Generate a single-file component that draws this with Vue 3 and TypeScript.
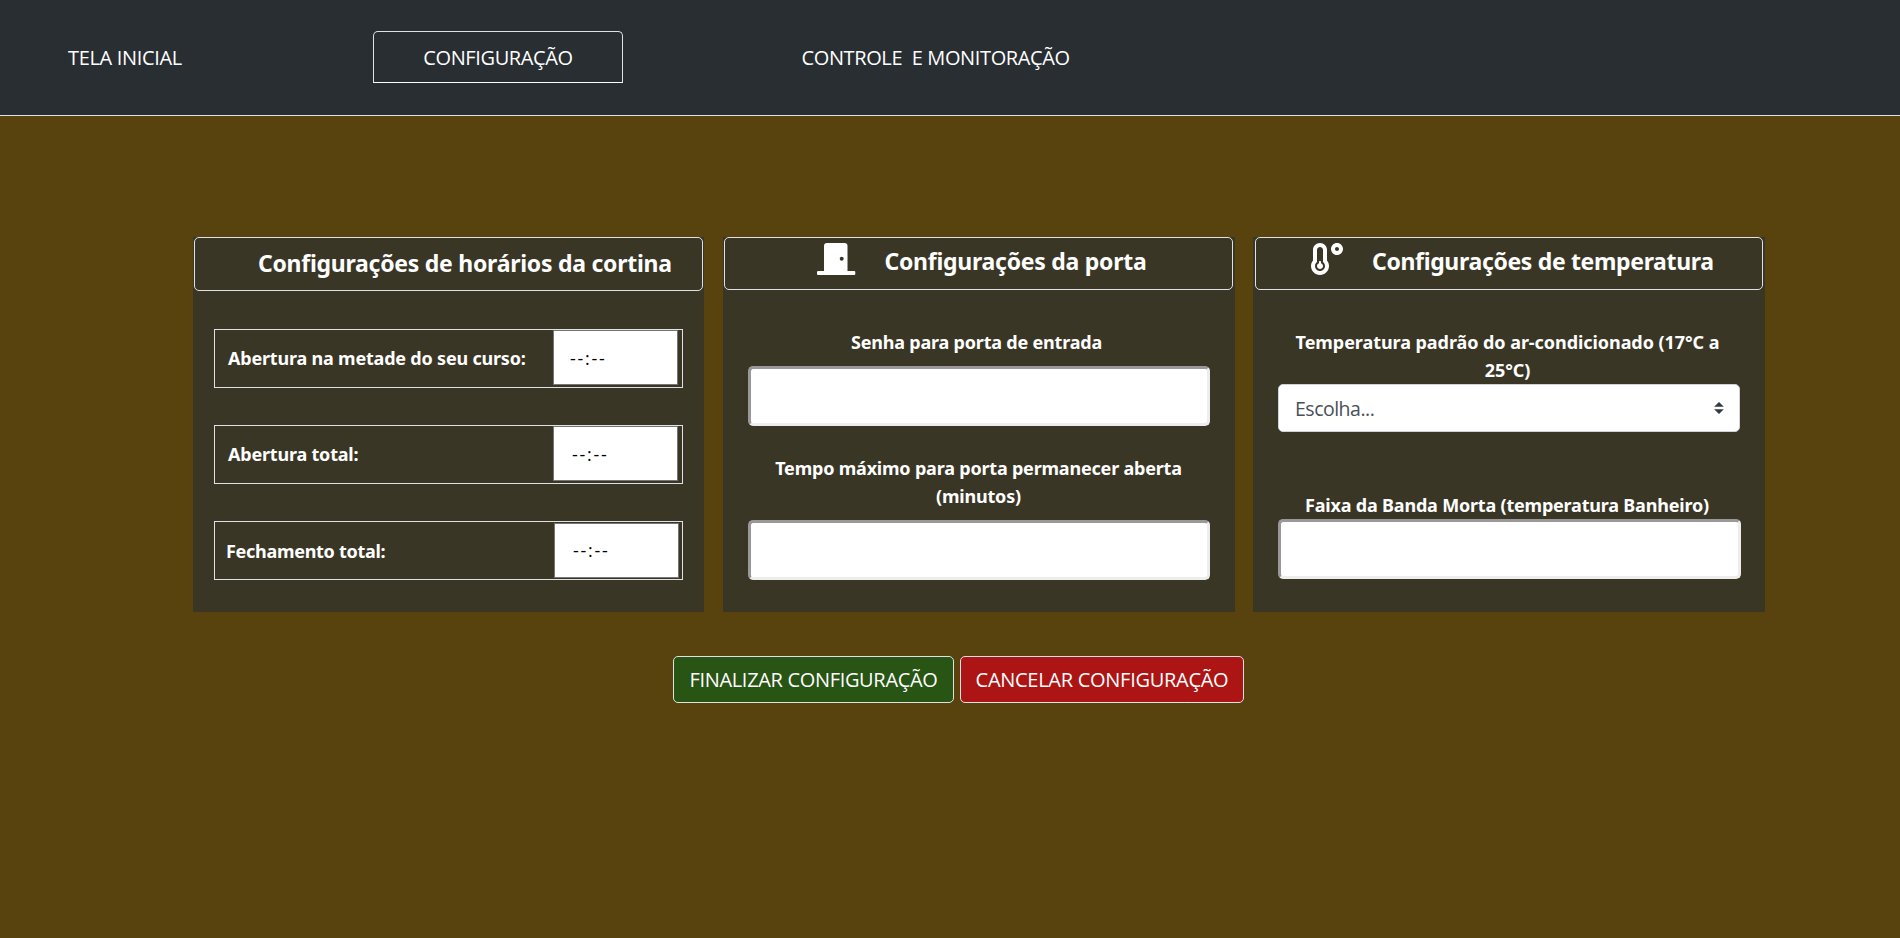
<script setup lang="ts">
import { ref } from 'vue'

interface NavItem {
  id: string
  label: string
  active?: boolean
}

interface Schedule {
  id: string
  label: string
}

const navItems: NavItem[] = [
  { id: 'home', label: 'TELA INICIAL' },
  { id: 'config', label: 'CONFIGURAÇÃO', active: true },
  { id: 'monitor', label: 'CONTROLE  E MONITORAÇÃO' },
]

const schedules: Schedule[] = [
  { id: 'half', label: 'Abertura na metade do seu curso:' },
  { id: 'full', label: 'Abertura total:' },
  { id: 'close', label: 'Fechamento total:' },
]

const password = ref('')
const openMinutes = ref('')
const deadBand = ref('')
</script>

<template>
  <div class="page">
    <nav class="navbar">
      <a
        v-for="item in navItems"
        :key="item.id"
        class="nav-link"
        :class="[`nav-${item.id}`, { active: item.active }]"
      >{{ item.label }}</a>
    </nav>

    <main class="cards">
      <section class="card">
        <header class="card-header header-curtain">
          <h2>Configurações de horários da cortina</h2>
        </header>
        <div class="schedules">
          <div v-for="s in schedules" :key="s.id" class="schedule" :class="`schedule-${s.id}`">
            <span class="schedule-label">{{ s.label }}</span>
            <span class="time">--:--</span>
          </div>
        </div>
      </section>

      <section class="card">
        <header class="card-header header-door">
          <svg class="icon-door" width="39" height="32" viewBox="0 0 39 32">
            <path
              fill="#fff"
              fill-rule="evenodd"
              d="M7 28V3a3 3 0 0 1 3-3h17.500a3 3 0 0 1 3 3v25H37.300a1 1 0 0 1 1 1v2a1 1 0 0 1-1 1H1a1 1 0 0 1-1-1v-2a1 1 0 0 1 1-1zM24.700 13.700a2 2 0 1 0 0 4a2 2 0 1 0 0-4z"
            />
          </svg>
          <h2>Configurações da porta</h2>
        </header>
        <div class="fields fields-door">
          <label class="field-label label-password">Senha para porta de entrada</label>
          <input v-model="password" class="field" type="password" />
          <label class="field-label label-minutes">Tempo máximo para porta permanecer aberta<br />(minutos)</label>
          <input v-model="openMinutes" class="field" type="text" />
        </div>
      </section>

      <section class="card">
        <header class="card-header header-temp">
          <svg class="icon-temp" width="32" height="32" viewBox="0 0 512 512">
            <path
              fill="#fff"
              d="M416 0c-52.900 0-96 43.100-96 96s43.100 96 96 96 96-43.100 96-96-43.100-96-96-96zm0 128c-17.700 0-32-14.300-32-32s14.300-32 32-32 32 14.300 32 32-14.300 32-32 32zm-160-16C256 50.100 205.900 0 144 0S32 50.100 32 112v166.500C12.300 303.200 0 334 0 368c0 79.500 64.500 144 144 144s144-64.500 144-144c0-34-12.300-64.900-32-89.500V112zM144 448c-44.100 0-80-35.900-80-80 0-25.500 12.200-48.900 32-63.800V112c0-26.500 21.500-48 48-48s48 21.500 48 48v192.200c19.800 14.800 32 38.300 32 63.800 0 44.100-35.900 80-80 80zm16-125.100V304c0-8.800-7.200-16-16-16s-16 7.200-16 16v18.900c-18.600 6.600-32 24.200-32 45.100 0 26.500 21.500 48 48 48s48-21.500 48-48c0-20.900-13.400-38.500-32-45.100z"
            />
          </svg>
          <h2>Configurações de temperatura</h2>
        </header>
        <div class="fields fields-temp">
          <label class="field-label label-temp">Temperatura padrão do ar-condicionado (17°C a<br />25°C)</label>
          <div class="select">
            <span>Escolha...</span>
            <svg width="10" height="12" viewBox="0 0 4 5">
              <path fill="#343a40" d="M2 0L0 2h4zm0 5L0 3h4z" />
            </svg>
          </div>
          <label class="field-label label-band">Faixa da Banda Morta (temperatura Banheiro)</label>
          <input v-model="deadBand" class="field field-band" type="text" />
        </div>
      </section>
    </main>

    <div class="actions">
      <button class="btn btn-finish" type="button">FINALIZAR CONFIGURAÇÃO</button>
      <button class="btn btn-cancel" type="button">CANCELAR CONFIGURAÇÃO</button>
    </div>
  </div>
</template>

<style>
body {
  background: #58420e;
}
</style>

<style scoped>
.page,
.page * {
  box-sizing: border-box;
}

.page {
  min-height: 938px;
  background: #58420e;
  color: #fff;
  font-family: "Open Sans", "Noto Sans", sans-serif;
  font-size: 20px;
}

.navbar {
  display: flex;
  align-items: flex-start;
  height: 116px;
  padding: 31px 0 0 68px;
  background: #292e32;
  border-bottom: 1px solid #dee2e6;
}

.nav-link {
  height: 52px;
  line-height: 53px;
  letter-spacing: -0.38px;
  white-space: pre;
}

.nav-home {
  width: 305px;
  letter-spacing: -0.33px;
}

.nav-link.active {
  width: 250px;
  line-height: 51px;
  text-align: center;
  border: 1px solid #dee2e6;
  border-bottom-color: #fff;
  border-radius: 5px 5px 0 0;
}

.nav-monitor {
  margin-left: 178.5px;
}

.cards {
  display: grid;
  grid-template-columns: 511px 512px 512px;
  column-gap: 18.5px;
  padding: 121px 0 0 193px;
}

.card {
  height: 375px;
  background: #3a3625;
}

.card-header {
  display: flex;
  height: 53px;
  margin: 0 1px;
  border: 1px solid #dee2e6;
  border-radius: 5px;
}

.card-header h2 {
  margin: 0;
  font: bold 23px/46px "Noto Sans", sans-serif;
  letter-spacing: -0.26px;
  white-space: nowrap;
}

.header-curtain {
  height: 54px;
  padding: 2px 0 0 63px;
}

.header-door {
  margin-right: 2px;
  padding-left: 92px;
}

.header-door h2 {
  margin-left: 29px;
}

.header-temp {
  margin: 0 2px;
  padding-left: 55px;
}

.header-temp h2 {
  margin-left: 29px;
  letter-spacing: -0.34px;
}

.icon-door {
  margin-top: 5px;
}

.icon-temp {
  margin-top: 5px;
}

.schedules {
  display: grid;
  row-gap: 37px;
  padding: 38px 21px 0;
}

.schedule {
  display: flex;
  height: 59px;
  width: 469px;
  padding: 0 4px 0 13px;
  border: 1px solid #dee2e6;
}

.schedule-label {
  flex: 1;
  font: bold 18px/56px "Noto Sans", sans-serif;
  letter-spacing: -0.2px;
}

.time {
  width: 125px;
  height: 55px;
  padding-left: 16px;
  background: #fff;
  border: 1px solid #767676;
  color: #000;
  font-size: 18px;
  line-height: 54px;
  letter-spacing: 1.7px;
}

.schedule-full .time {
  padding-left: 18px;
}

.schedule-close {
  padding: 1px 3px 0 11px;
}

.schedule-close .time {
  padding-left: 18px;
  line-height: 52px;
}

.schedule-close .schedule-label {
  letter-spacing: -0.29px;
}

.fields {
  display: flex;
  flex-direction: column;
  padding: 38px 25px 0;
}

.field-label {
  font: bold 18px/28px "Noto Sans", sans-serif;
  letter-spacing: -0.2px;
  text-align: center;
  white-space: nowrap;
}

.label-password {
  padding-right: 4px;
  margin-bottom: 10px;
}

.label-minutes {
  margin: 28px 0 10px;
}

.label-temp {
  padding-right: 3px;
  letter-spacing: -0.06px;
}

.label-band {
  margin-top: 59px;
  padding-right: 4px;
}

.field {
  display: block;
  width: 462px;
  height: 60px;
  padding: 0 16px;
  background: #fff;
  border: 3px solid;
  border-color: #9a9899 #ededed #ededed #9a9899;
  border-radius: 5px;
  font: inherit;
  outline: none;
}

.field-band {
  width: 463px;
}

.select {
  display: flex;
  align-items: center;
  justify-content: space-between;
  width: 462px;
  height: 48px;
  padding: 0 15px 0 16px;
  background: #fff;
  border: 1px solid #ced4da;
  border-radius: 5px;
  color: #495057;
  font-size: 19.5px;
  line-height: 46px;
  letter-spacing: -0.5px;
}

.select span {
  padding-top: 1px;
}

.actions {
  display: flex;
  gap: 6px;
  padding: 44px 0 0 673px;
}

.btn {
  width: 281px;
  height: 47px;
  padding: 0;
  border: 1px solid #dee2e6;
  border-radius: 5px;
  color: #fff;
  font: 20px/44px "Open Sans", sans-serif;
  letter-spacing: -0.33px;
  text-align: center;
  white-space: nowrap;
}

.btn-finish {
  background: #285414;
}

.btn-cancel {
  width: 284px;
  background: #ad1515;
  letter-spacing: -0.28px;
}
</style>
